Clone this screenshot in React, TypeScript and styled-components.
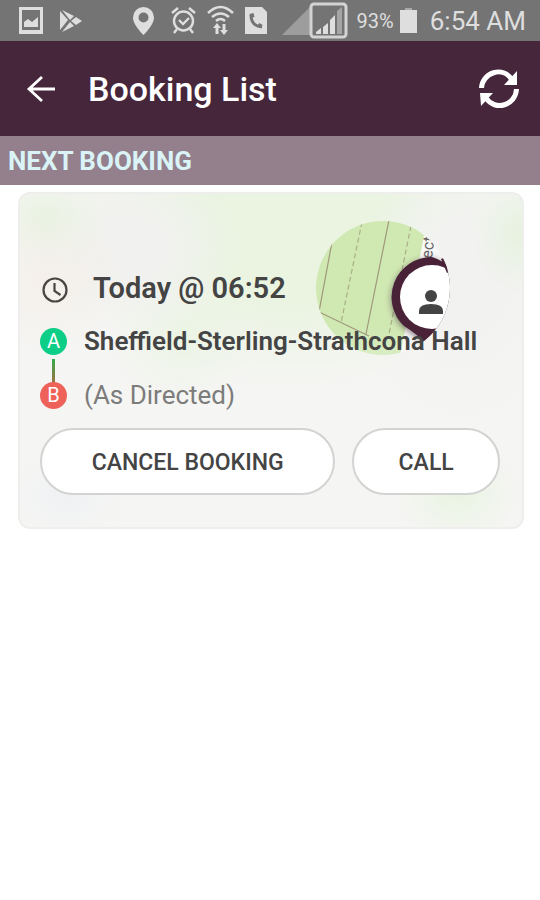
import React from 'react';
import styled, { createGlobalStyle } from 'styled-components';

const GlobalStyle = createGlobalStyle`
  * { box-sizing: border-box; }
  body { margin: 0; background: #fff; font-family: Roboto, "Liberation Sans", sans-serif; color: #444; }
  svg { display: block; flex: none; }
  h1, h2, p { margin: 0; }
`;

const Screen = styled.div`
  min-height: 100vh;
  background: #fff;
`;

const StatusBar = styled.div`
  display: flex;
  align-items: center;
  justify-content: space-between;
  height: 41px;
  padding: 0 14px 0 19px;
  background: #747474;
  color: #dedede;
`;

const StatusGroup = styled.div<{ $gap: number }>`
  display: flex;
  align-items: center;
  gap: ${p => p.$gap}px;
`;

const StatusText = styled.span<{ $size: number }>`
  font-size: ${p => p.$size}px;
  line-height: 32px;
  white-space: nowrap;
`;

const Header = styled.header`
  display: flex;
  align-items: center;
  height: 95px;
  padding: 0 20px 0 26px;
  background: #46263b;
  color: #fff;
`;

const IconButton = styled.button`
  display: flex;
  padding: 0;
  border: 0;
  background: none;
  color: inherit;
  cursor: pointer;
`;

const Title = styled.h1`
  flex: 1;
  padding-left: 32px;
  font-size: 34px;
  font-weight: 500;
  line-height: 40px;
`;

const SectionTitle = styled.h2`
  padding: 9px 8px 7px;
  background: #93808c;
  color: #d9f3f6;
  font-size: 26px;
  font-weight: 700;
  line-height: 33px;
`;

const Card = styled.article`
  position: relative;
  margin: 7px 16px 0 18px;
  padding: 76px 22px 32px 20px;
  border: 2px solid #eeeeec;
  border-radius: 12px;
  background:
    radial-gradient(ellipse 80px 70px at 5% 26%, rgba(244, 238, 232, 0.8), transparent),
    radial-gradient(ellipse 60px 50px at 5% 8%, rgba(230, 242, 220, 0.8), transparent),
    radial-gradient(ellipse 110px 90px at 22% 16%, rgba(241, 241, 239, 1) 30%, rgba(241, 241, 239, 0)),
    radial-gradient(ellipse 70px 60px at 32% 44%, rgba(234, 244, 226, 0.8), transparent),
    radial-gradient(ellipse 50px 60px at 100% 12%, rgba(228, 242, 218, 0.8), transparent),
    radial-gradient(ellipse 60px 50px at 87% 90%, rgba(232, 244, 224, 0.9), rgba(232, 244, 224, 0)),
    radial-gradient(ellipse 60px 40px at 9% 91%, rgba(236, 238, 244, 0.6), transparent),
    radial-gradient(ellipse 110px 130px at 88% 28%, rgba(242, 242, 241, 1) 40%, rgba(242, 242, 241, 0)),
    radial-gradient(ellipse 230px 160px at 54% 10%, rgba(234, 244, 225, 1) 45%, rgba(234, 244, 225, 0)),
    #f5f5f3;
`;

const MapPreview = styled.svg`
  position: absolute;
  top: 26px;
  right: 71px;
`;

const Trip = styled.div`
  position: relative;
`;

const Row = styled.div<{ $height: number; $gap: number; $inset?: number }>`
  display: flex;
  align-items: center;
  height: ${p => p.$height}px;
  gap: ${p => p.$gap}px;
  padding-left: ${p => p.$inset ?? 0}px;
`;

const When = styled.p`
  font-size: 29px;
  font-weight: 600;
  line-height: 36px;
`;

const Place = styled.p<{ $muted?: boolean }>`
  font-size: 26px;
  font-weight: ${p => (p.$muted ? 400 : 600)};
  line-height: 32px;
  color: ${p => (p.$muted ? '#7c7c7b' : '#444')};
  white-space: nowrap;
`;

const Stop = styled.span<{ $color: string }>`
  display: flex;
  flex: none;
  align-items: center;
  justify-content: center;
  width: 27px;
  height: 27px;
  border-radius: 50%;
  background: ${p => p.$color};
  color: #fff;
  font-size: 20px;
  line-height: 27px;
`;

const Link = styled.div`
  width: 3px;
  height: 26px;
  margin: -17px 0 -10px 12px;
  background: linear-gradient(#36a94b, #a56e42);
`;

const Actions = styled.div`
  display: grid;
  grid-template-columns: 2fr 1fr;
  gap: 17px;
  padding-top: 13px;
`;

const ActionButton = styled.button`
  height: 67px;
  padding: 2px 0 0;
  border: 2px solid #d3d3d2;
  border-radius: 34px;
  background: #fff;
  color: #444;
  font: 500 23px/30px Roboto, "Liberation Sans", sans-serif;
  cursor: pointer;
`;

const PictureIcon = () => (
  <svg width="24" height="27" viewBox="0 0 24 27">
    <path fill="#dedede" fillRule="evenodd" d="M0 0h24v27H0zM3 3v20h18V3zM5 20v-5l4-3 4 3 6-5v10z" />
  </svg>
);

const PlayIcon = () => (
  <svg width="22" height="22" viewBox="0 0 22 22" fill="#dedede">
    <path d="M0 1l8 9-8 10zM2 0l12 6-4 4zM2 22l8-10 4 4zM11 11l5-4 6 4-6 4z" />
  </svg>
);

const PinIcon = () => (
  <svg width="21" height="28" viewBox="0 0 21 28">
    <path fill="#dedede" fillRule="evenodd" d="M10.500 0A10.500 10.500 0 0 0 0 10.500C0 18 10.500 28 10.500 28S21 18 21 10.500A10.500 10.500 0 0 0 10.500 0zm0 5.500a5 5 0 1 1 0 10 5 5 0 0 1 0-10z" />
  </svg>
);

const AlarmIcon = () => (
  <svg width="25" height="27" viewBox="0 0 25 27" fill="none" stroke="#dedede" strokeWidth="2.400">
    <circle cx="12.500" cy="14" r="9.500" />
    <path d="M1 6l6-5M24 6l-6-5M6 22l-3 4M19 22l3 4M8 13l4 4 6-6" />
  </svg>
);

const WifiIcon = () => (
  <svg width="27" height="31" viewBox="0 0 27 31" fill="none" stroke="#dedede" strokeWidth="2.600">
    <path d="M1 8Q13.500-4 26 8M5 12q8.500-7 17 0M9 16q4.500-4 9 0" />
    <path d="M10 29v-8M17 19v8" strokeWidth="3" />
    <path fill="#dedede" stroke="none" d="M6 23l4-5 4 5zM13 25h8l-4 5z" />
  </svg>
);

const PhoneFileIcon = () => (
  <svg width="22" height="27" viewBox="0 0 22 27">
    <path fill="#dedede" d="M0 0h17l5 5v22H0z" />
    <path fill="none" stroke="#747474" strokeWidth="3" d="M6 8q0 11 11 12" />
    <path fill="none" stroke="#747474" strokeWidth="4" d="M5 9l4-1M14 20l2-3" />
  </svg>
);

const SignalIcon = () => (
  <svg width="66" height="37" viewBox="0 0 66 37">
    <path fill="#9d9d9d" d="M0 33L28 5v28z" />
    <rect x="29" y="2" width="35" height="33" rx="3" fill="#747474" stroke="#d3d3d3" strokeWidth="3" />
    <path fill="#a5a5a5" d="M55 9l5-4v27h-5z" />
    <path fill="#dedede" d="M34 32v-2l5-4v6zM41 25l5-4v11h-5zM48 18l5-5v19h-5z" />
  </svg>
);

const BatteryIcon = () => (
  <svg width="17" height="26" viewBox="0 0 17 26">
    <path fill="#a9a9a9" d="M5 0h7v3H5z" />
    <path fill="#dedede" d="M0 2h17v23H0z" />
  </svg>
);

const BackIcon = () => (
  <svg width="30" height="28" viewBox="0 0 30 28" fill="none" stroke="#fff" strokeWidth="2.800">
    <path d="M29 14H3M16 2L3 14l13 12" />
  </svg>
);

const RefreshIcon = () => (
  <svg width="42" height="40" viewBox="0 0 42 40">
    <g fill="none" stroke="#fff" strokeWidth="5">
      <path d="M3.500 19C4 4 25-4 34 11" />
      <path d="M38.500 20C38 36 17 43 8 29" />
    </g>
    <path fill="#fff" d="M39 2v14H26zM2 24h13L3 37z" />
  </svg>
);

const ClockIcon = () => (
  <svg width="26" height="30" viewBox="0 0 26 30" fill="none" stroke="#484644" strokeWidth="2.200">
    <circle cx="13" cy="17" r="11.500" />
    <path d="M12.500 10v8l6 4" />
  </svg>
);

const MapCircle = () => (
  <MapPreview width="136" height="136" viewBox="0 0 136 136" aria-hidden="true">
    <defs>
      <clipPath id="lens"><circle cx="68" cy="68" r="67" /></clipPath>
      <linearGradient id="fade" x1="0" x2="0" y1="0" y2="1">
        <stop offset="0.800" stopColor="#d0e8b2" />
        <stop offset="1" stopColor="#d9edc4" />
      </linearGradient>
      <filter id="shadow" x="-30%" y="-30%" width="160%" height="160%">
        <feDropShadow dx="0" dy="2" stdDeviation="3" floodColor="#3e2838" floodOpacity="0.600" />
      </filter>
    </defs>
    <g clipPath="url(#lens)">
      <path fill="#f8f8f6" d="M0 0h136v136H0z" />
      <path fill="url(#fade)" d="M0 0h112l-7 36-14 70-6 30H0z" />
      <g fill="none" strokeWidth="1.200">
        <path d="M17 22L4 92l50 24M74 0L51 114" stroke="#a0987c" />
        <path d="M47 2L26 103M96 6L74 114" stroke="#a9ae88" strokeDasharray="5 3" />
      </g>
      <text transform="translate(117 39) rotate(-84)" fontFamily="Roboto" fontSize="16" fill="#666">ect</text>
      <g filter="url(#shadow)">
        <path fill="#482239" d="M117 37a40 40 0 0 0-28 69q13 8 20 16 8-8 20-14a40 40 0 0 0-12-71z" />
      </g>
      <circle cx="117" cy="77" r="32" fill="#fff" />
      <path fill="#482239" d="M126 39l6 14 4-2V35z" />
    </g>
    <g fill="#444">
      <circle cx="116" cy="76" r="6" />
      <path d="M104 94v-3q0-7 12-7t12 7v3z" />
    </g>
  </MapPreview>
);

export default function App() {
  return (
    <Screen>
      <GlobalStyle />
      <StatusBar>
        <StatusGroup $gap={17}>
          <PictureIcon />
          <PlayIcon />
        </StatusGroup>
        <StatusGroup $gap={13}>
          <StatusGroup $gap={15}>
            <StatusGroup $gap={17}>
              <PinIcon />
              <StatusGroup $gap={11}>
                <AlarmIcon />
                <WifiIcon />
                <PhoneFileIcon />
              </StatusGroup>
            </StatusGroup>
            <StatusGroup $gap={9}>
              <SignalIcon />
              <StatusGroup $gap={6}>
                <StatusText $size={20}>93%</StatusText>
                <BatteryIcon />
              </StatusGroup>
            </StatusGroup>
          </StatusGroup>
          <StatusText $size={26}>6:54 AM</StatusText>
        </StatusGroup>
      </StatusBar>
      <Header>
        <IconButton aria-label="Back"><BackIcon /></IconButton>
        <Title>Booking List</Title>
        <IconButton aria-label="Refresh"><RefreshIcon /></IconButton>
      </Header>
      <main>
        <SectionTitle>NEXT BOOKING</SectionTitle>
        <Card>
          <MapCircle />
          <Trip>
            <Row $height={36} $gap={25} $inset={2}>
              <ClockIcon />
              <When>Today @ 06:52</When>
            </Row>
            <Row $height={70} $gap={17}>
              <Stop $color="#0cce87">A</Stop>
              <Place>Sheffield-Sterling-Strathcona Hall</Place>
            </Row>
            <Link />
            <Row $height={40} $gap={17}>
              <Stop $color="#ee6259">B</Stop>
              <Place $muted>(As Directed)</Place>
            </Row>
          </Trip>
          <Actions>
            <ActionButton>CANCEL BOOKING</ActionButton>
            <ActionButton>CALL</ActionButton>
          </Actions>
        </Card>
      </main>
    </Screen>
  );
}
